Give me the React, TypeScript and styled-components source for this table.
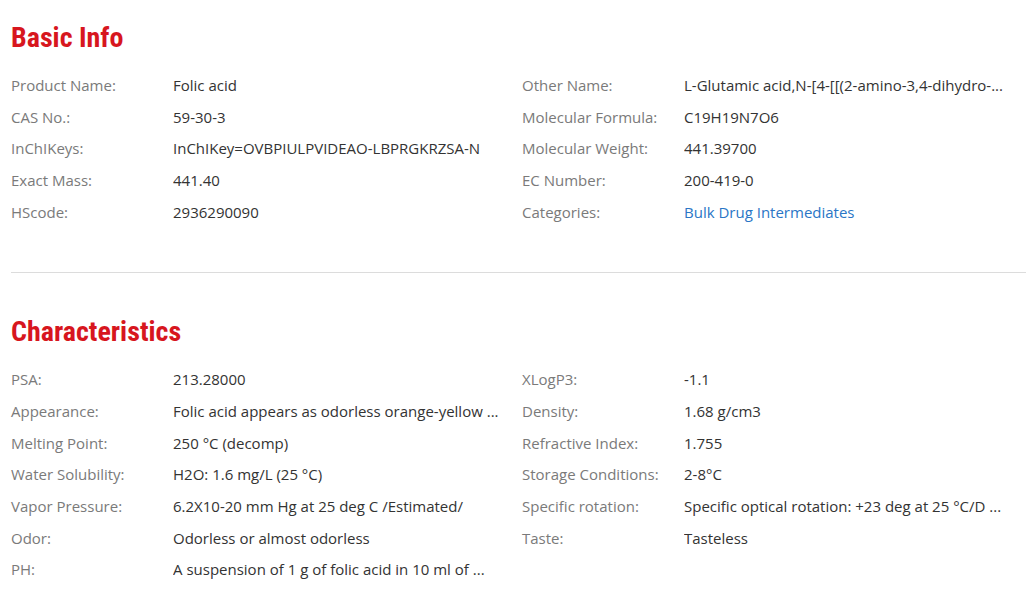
import styled, { createGlobalStyle } from 'styled-components'

const GlobalStyle = createGlobalStyle`
  body {
    margin: 0;
    background: #fff;
    font-family: "Open Sans", "Noto Sans", sans-serif;
  }
`

type Item = { label: string; value: string; link?: boolean }

const basicInfo: Item[] = [
  { label: 'Product Name:', value: 'Folic acid' },
  { label: 'Other Name:', value: 'L-Glutamic acid,N-[4-[[(2-amino-3,4-dihydro-...' },
  { label: 'CAS No.:', value: '59-30-3' },
  { label: 'Molecular Formula:', value: 'C19H19N7O6' },
  { label: 'InChIKeys:', value: 'InChIKey=OVBPIULPVIDEAO-LBPRGKRZSA-N' },
  { label: 'Molecular Weight:', value: '441.39700' },
  { label: 'Exact Mass:', value: '441.40' },
  { label: 'EC Number:', value: '200-419-0' },
  { label: 'HScode:', value: '2936290090' },
  { label: 'Categories:', value: 'Bulk Drug Intermediates', link: true },
]

const characteristics: Item[] = [
  { label: 'PSA:', value: '213.28000' },
  { label: 'XLogP3:', value: '-1.1' },
  { label: 'Appearance:', value: 'Folic acid appears as odorless orange-yellow ...' },
  { label: 'Density:', value: '1.68 g/cm3' },
  { label: 'Melting Point:', value: '250 °C (decomp)' },
  { label: 'Refractive Index:', value: '1.755' },
  { label: 'Water Solubility:', value: 'H2O: 1.6 mg/L (25 °C)' },
  { label: 'Storage Conditions:', value: '2-8°C' },
  { label: 'Vapor Pressure:', value: '6.2X10-20 mm Hg at 25 deg C /Estimated/' },
  { label: 'Specific rotation:', value: 'Specific optical rotation: +23 deg at 25 °C/D ...' },
  { label: 'Odor:', value: 'Odorless or almost odorless' },
  { label: 'Taste:', value: 'Tasteless' },
  { label: 'PH:', value: 'A suspension of 1 g of folic acid in 10 ml of ...' },
]

const InfoSection = ({ title, items, last }: { title: string; items: Item[]; last?: boolean }) => (
  <Section $last={last}>
    <Title>{title}</Title>
    <Grid>
      {items.map((item) => (
        <Row key={item.label}>
          <Label>{item.label}</Label>
          {item.link ? <LinkValue href="#">{item.value}</LinkValue> : <Value>{item.value}</Value>}
        </Row>
      ))}
    </Grid>
  </Section>
)

const App = () => {
  return (
    <Page>
      <GlobalStyle />
      <InfoSection title="Basic Info" items={basicInfo} />
      <InfoSection title="Characteristics" items={characteristics} last />
    </Page>
  )
}

export default App

const Page = styled.div`
  padding: 23px 0 0 11px;
  overflow: hidden;
`

const Section = styled.section<{ $last?: boolean }>`
  padding-bottom: 45px;
  margin-bottom: 44px;
  border-bottom: ${(p) => (p.$last ? 'none' : '1px solid #dcdcdc')};
`

const Title = styled.h2`
  margin: 0 0 16px;
  font-family: "Liberation Sans Narrow", "Roboto Condensed", "Liberation Sans", sans-serif;
  font-size: 28px;
  line-height: 30px;
  font-weight: 700;
  color: #d7161e;
`

const Grid = styled.div`
  display: grid;
  grid-template-columns: 511px 1fr;
`

const Row = styled.div`
  display: grid;
  grid-template-columns: 162px 1fr;
  height: 31.7px;
  align-items: center;
  font-size: 15px;
`

const Label = styled.span`
  color: #7a7a7a;
  white-space: nowrap;
`

const Value = styled.span`
  color: #333;
  white-space: nowrap;
  overflow: hidden;
`

const LinkValue = styled.a`
  color: #2a76c6;
  text-decoration: none;
  white-space: nowrap;
`
